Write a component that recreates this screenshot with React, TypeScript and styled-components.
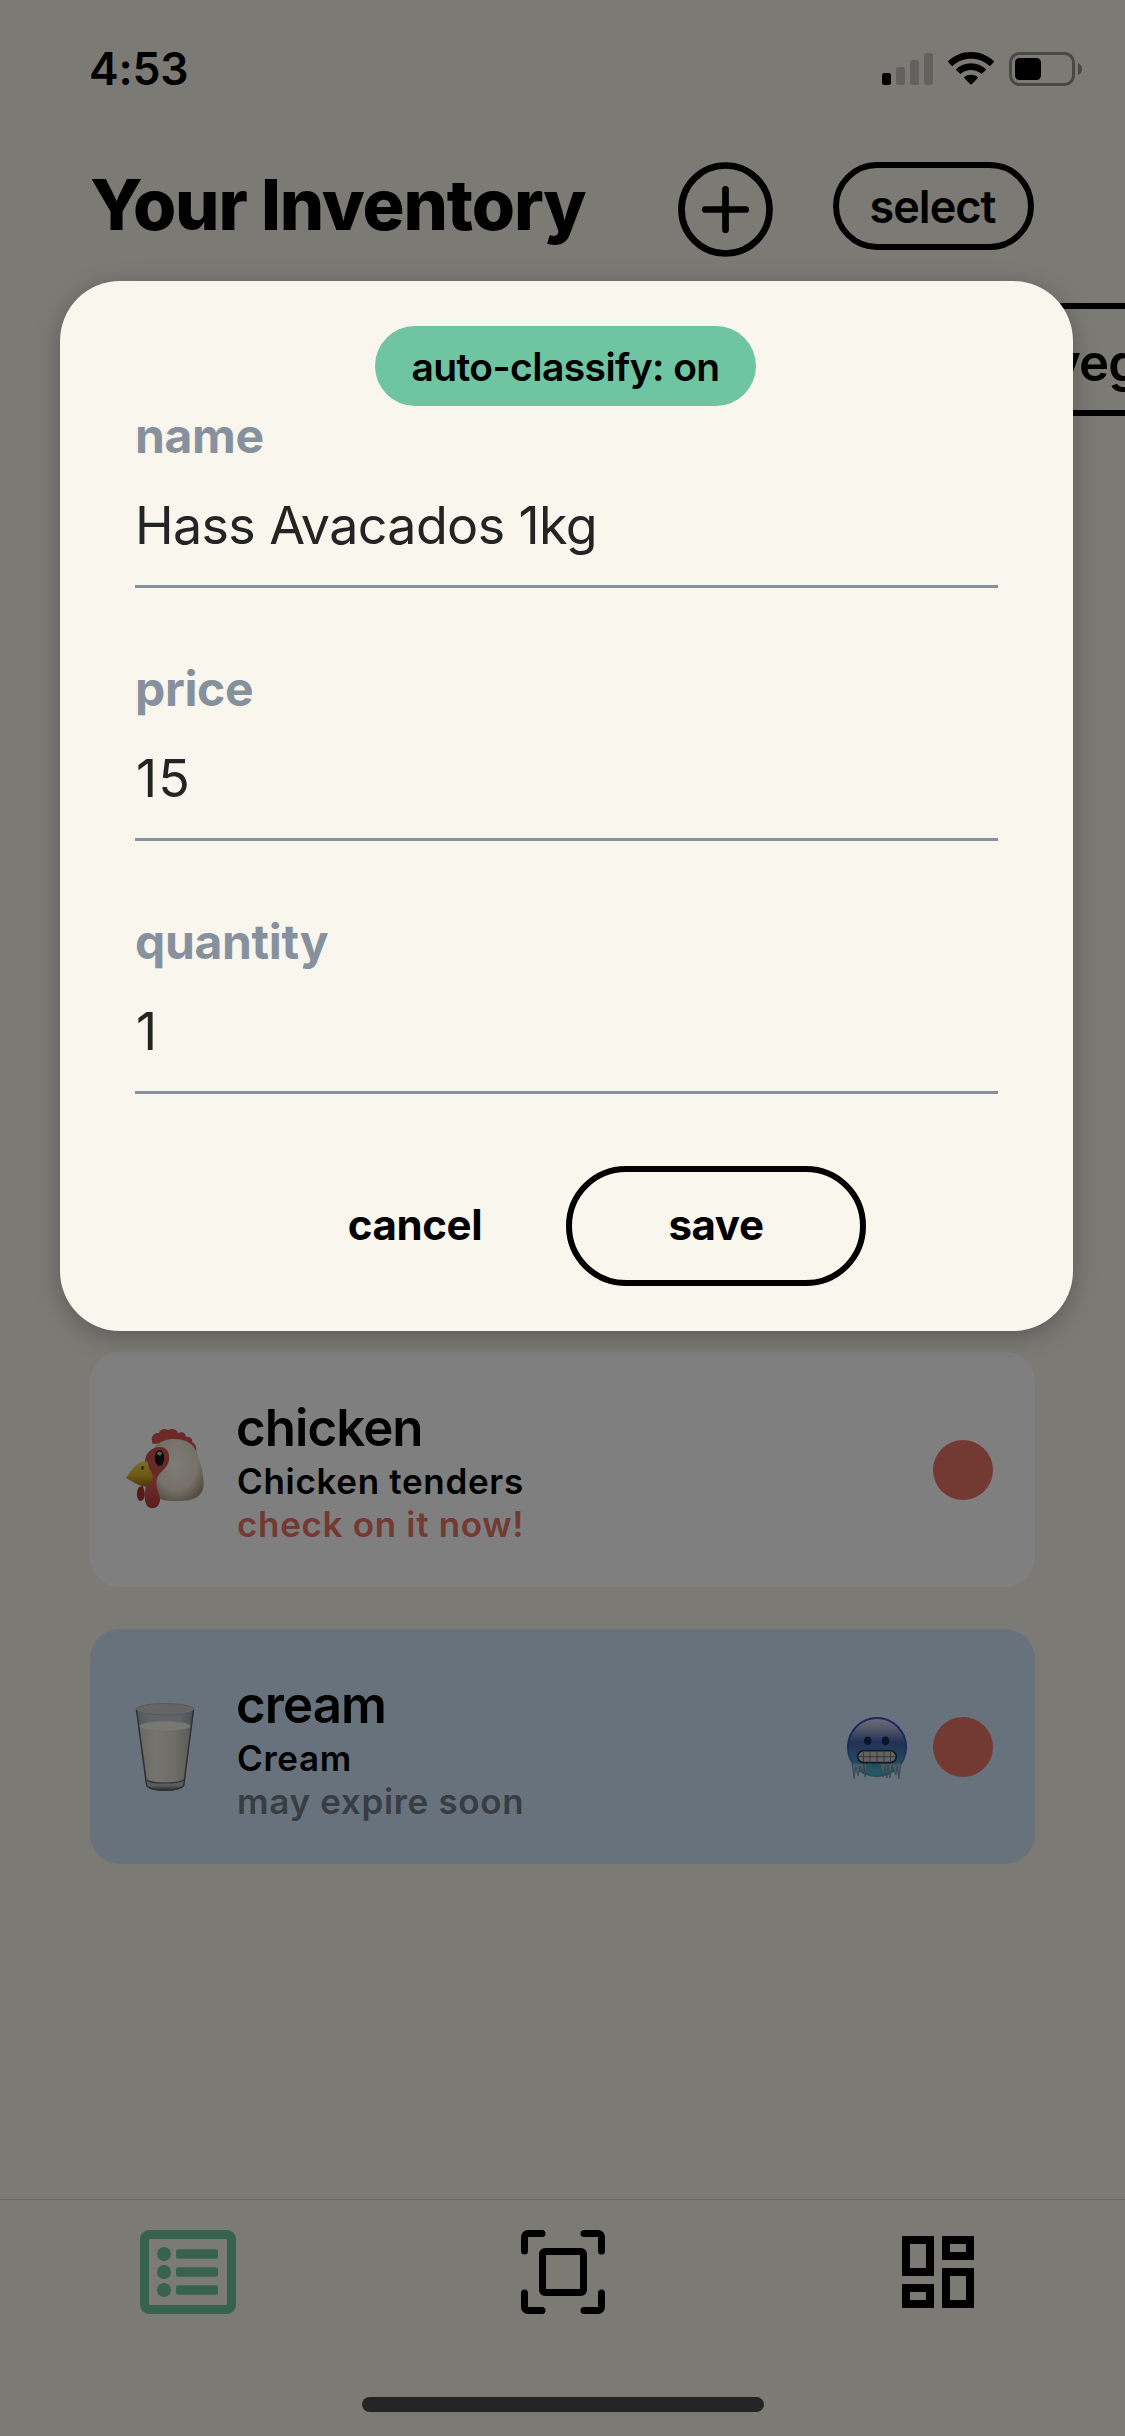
import React from 'react';
import styled, { createGlobalStyle } from 'styled-components';

const colors = {
  canvas: '#f8f4ea',
  sheet: '#f9f6ee',
  green: '#6fc4a1',
  red: '#e77467',
  slate: '#87919e',
  frozen: '#d0e4fa',
};

const GlobalStyle = createGlobalStyle`
  *, *::before, *::after { box-sizing: border-box; }
  body {
    margin: 0;
    background: ${colors.canvas};
    font-family: Inter, "Liberation Sans", sans-serif;
    color: #000;
  }
  button {
    font-family: inherit;
    color: inherit;
    padding: 0;
    border: 0;
    background: none;
  }
  svg { display: block; overflow: visible; flex: none; }
`;

const Screen = styled.main`
  position: relative;
  display: flex;
  flex-direction: column;
  width: 1125px;
  height: 2436px;
  overflow: hidden;
  background: ${colors.canvas};
`;

/* status bar */
const StatusBar = styled.div`
  display: flex;
  justify-content: space-between;
  align-items: flex-start;
  height: 162px;
  padding: 39px 43px 0 89px;
`;

const Clock = styled.span`
  font-size: 44.5px;
  font-weight: 600;
  line-height: 60px;
  letter-spacing: -0.2px;
`;

const StatusIcons = styled.div`
  display: flex;
  align-items: flex-start;
  gap: 15px;
  padding-top: 13px;
`;

/* header */
const Header = styled.header`
  display: flex;
  align-items: flex-start;
  height: 141px;
  padding: 0 91px 0 90px;
`;

const Title = styled.h1`
  flex: 1;
  margin: 3px 0 0;
  font-size: 70px;
  font-weight: 800;
  line-height: 80px;
  letter-spacing: -1.13px;
  white-space: nowrap;
`;

const AddButton = styled.button`
  width: 95px;
  height: 95px;
  margin-right: 60px;
`;

const SelectButton = styled.button`
  width: 201px;
  height: 88px;
  padding-right: 2px;
  border: 6px solid #000;
  border-radius: 44px;
  font-size: 45px;
  font-weight: 600;
  line-height: 78px;
  letter-spacing: -0.95px;
`;

const Filters = styled.div`
  display: flex;
  justify-content: flex-end;
  height: 113px;
  margin-right: -120px;
`;

const FilterChip = styled.div`
  width: 225px;
  padding-left: 25px;
  border: 6px solid #000;
  border-radius: 45px;
  font-size: 51px;
  font-weight: 600;
  line-height: 107px;
  letter-spacing: -0.9px;
`;

/* inventory */
const Inventory = styled.section`
  display: flex;
  flex-direction: column;
  justify-content: flex-end;
  gap: 42px;
  height: 1448px;
  padding: 0 90px;
`;

const Card = styled.article<{ $frozen?: boolean }>`
  display: flex;
  align-items: center;
  height: 235px;
  padding: 0 42px 0 30px;
  border-radius: 30px;
  background: ${(p) => (p.$frozen ? colors.frozen : '#fff')};
`;

const Picture = styled.div`
  display: flex;
  justify-content: center;
  width: 90px;
  margin-right: 26px;
  padding-right: 1px;
`;

const Details = styled.div`
  flex: 1;
  padding-top: 4px;
`;

const ItemName = styled.h2`
  margin: 0 0 2px;
  font-size: 51px;
  font-weight: 600;
  line-height: 60px;
  letter-spacing: -0.95px;
`;

const ItemLine = styled.p<{ $color?: string }>`
  margin: 0;
  padding-left: 1px;
  font-size: 35px;
  font-weight: 600;
  line-height: 43px;
  letter-spacing: 0.68px;
  color: ${(p) => p.$color ?? '#000'};
`;

const Badges = styled.div`
  display: flex;
  align-items: center;
  gap: 26px;
`;

const Dot = styled.span`
  width: 60px;
  height: 60px;
  border-radius: 50%;
  background: ${colors.red};
`;

/* tab bar */
const TabBar = styled.nav`
  display: grid;
  grid-template-columns: repeat(3, 1fr);
  place-items: center;
  height: 115px;
  margin-top: auto;
  padding-top: 30px;
  border-top: 1px solid #d2cfc7;
`;

const HomeArea = styled.div`
  display: flex;
  justify-content: center;
  height: 122px;
  padding-top: 83px;
`;

const HomeIndicator = styled.div`
  width: 402px;
  height: 15px;
  border-radius: 8px;
  background: #484848;
`;

/* edit dialog */
const Backdrop = styled.div`
  position: absolute;
  inset: 0;
  padding: 281px 52px 0 60px;
  background: rgba(0, 0, 0, 0.5);
`;

const Dialog = styled.form`
  display: flex;
  flex-direction: column;
  width: 1013px;
  height: 1050px;
  padding: 45px 75px;
  border-radius: 60px;
  background: ${colors.sheet};
  box-shadow: 0 6px 24px rgba(0, 0, 0, 0.25);
`;

const ClassifyToggle = styled.button`
  align-self: center;
  width: 381px;
  height: 80px;
  margin: 0 2px 2px 0;
  border-radius: 40px;
  background: ${colors.green};
  font-size: 39px;
  font-weight: 600;
  line-height: 81px;
  letter-spacing: -0.57px;
`;

const Fields = styled.div`
  display: flex;
  flex-direction: column;
  gap: 73px;
`;

const Field = styled.div`
  border-bottom: 3px solid ${colors.slate};
  padding-bottom: 26px;
`;

const FieldLabel = styled.div`
  margin-bottom: 29px;
  font-size: 48px;
  font-weight: 700;
  line-height: 56px;
  letter-spacing: -0.35px;
  color: ${colors.slate};
`;

const FieldValue = styled.div<{ $numeric?: boolean }>`
  padding-left: ${(p) => (p.$numeric ? 1 : 0)}px;
  font-size: 52px;
  font-weight: 400;
  line-height: 66px;
  letter-spacing: ${(p) => (p.$numeric ? 1.2 : -0.64)}px;
  color: #242424;
`;

const Actions = styled.div`
  display: flex;
  justify-content: center;
  gap: 1px;
  margin: 72px 2px 0 0;
`;

const ActionButton = styled.button<{ $outlined?: boolean }>`
  width: 300px;
  height: 120px;
  padding-bottom: 4px;
  border: 6px solid ${(p) => (p.$outlined ? '#000' : 'transparent')};
  border-radius: 60px;
  font-size: 42px;
  font-weight: 700;
  letter-spacing: -0.35px;
`;

const SignalIcon = () => (
  <svg width="51" height="33" viewBox="0 0 51 33">
    <rect x="0" y="21" width="9" height="12" rx="2.5" />
    <g opacity="0.2">
      <rect x="14" y="15" width="9" height="18" rx="2.5" />
      <rect x="28" y="8" width="9" height="25" rx="2.5" />
      <rect x="42" y="1" width="9" height="32" rx="2.5" />
    </g>
  </svg>
);

const WifiIcon = () => (
  <svg width="46" height="33" viewBox="0 0 46 33">
    <path d="M23 0C31.8 0 39.800 3.400 45.700 9C46.100 9.400 46.100 9.900 45.700 10.300L42.300 13.700C41.900 14.100 41.400 14.100 41 13.700C36.300 9.400 30 6.800 23 6.800S9.700 9.400 5 13.700C4.600 14.100 4.100 14.100 3.700 13.700L.3 10.300C-.1 9.900-.1 9.400.3 9C6.200 3.400 14.200 0 23 0Z" />
    <path d="M23 11.300C28.700 11.300 33.800 13.400 37.600 16.900C38 17.300 38 17.800 37.600 18.200L34.200 21.600C33.800 22 33.300 22 32.900 21.600C30.300 19.300 26.800 18 23 18S15.700 19.300 13.100 21.600C12.700 22 12.200 22 11.800 21.600L8.400 18.200C8 17.800 8 17.300 8.400 16.900C12.200 13.400 17.300 11.300 23 11.300Z" />
    <path d="M23 22.700C25.600 22.700 27.900 23.600 29.600 25C30 25.400 30 25.900 29.600 26.300L23.700 32.300C23.300 32.700 22.700 32.700 22.300 32.300L16.400 26.300C16 25.900 16 25.400 16.400 25C18.100 23.600 20.400 22.700 23 22.700Z" />
  </svg>
);

const BatteryIcon = () => (
  <svg width="73" height="34" viewBox="0 0 73 34">
    <g opacity="0.4">
      <rect x="1.500" y="1.500" width="63" height="31" rx="9" fill="none" stroke="#000" strokeWidth="3" />
      <path d="M69 11C71.500 12 73 14.300 73 17S71.500 22 69 23Z" />
    </g>
    <rect x="6" y="6" width="26" height="22" rx="4.500" />
  </svg>
);

const AddIcon = () => (
  <svg width="95" height="95" viewBox="0 0 95 95" fill="none" stroke="#000" strokeWidth="6.700" strokeLinecap="round">
    <circle cx="47.500" cy="47.500" r="44" />
    <path d="M47.500 27.300V67.700M27.300 47.500H67.700" />
  </svg>
);

const ChickenPicture = () => (
  <svg width="78" height="81" viewBox="0 0 78 81">
    <defs>
      <radialGradient id="feathers" cx="0.45" cy="0.4" r="0.65">
        <stop offset="0" stopColor="#fdf8ee" />
        <stop offset="0.65" stopColor="#ece3d4" />
        <stop offset="1" stopColor="#aa9b83" />
      </radialGradient>
      <linearGradient id="beak" x1="0" y1="0" x2="0" y2="1">
        <stop offset="0" stopColor="#f2d74c" />
        <stop offset="0.55" stopColor="#dcb42c" />
        <stop offset="1" stopColor="#9c6a14" />
      </linearGradient>
      <linearGradient id="wattle" x1="0" y1="0" x2="0" y2="1">
        <stop offset="0" stopColor="#e4655f" />
        <stop offset="1" stopColor="#b23a36" />
      </linearGradient>
    </defs>
    <path d="M27 15C24 9 27 3 33 4C34 0 39-1 42 1C46-1 51 0 52 4C56 2 60 4 60 8C64 7 67 10 66 13C70 15 71 19 70 24L48 13Z" fill="#d9534f" />
    <path d="M28 19C33 12 41 10 48 10C60 10 68 15 71 24C75 36 78 48 77.500 56C77 67 69 72 52 72C40 72 32 71 30 66Z" fill="url(#feathers)" />
    <path d="M19 33C19 23 27 18 34 18C41 18 44 24 43 31C42 40 32 43 31 50L25 48Z" fill="#cf5350" />
    <path d="M27 45C21 51 18 60 19 71C20 82 33 82 34 71C34 64 29 60 31 49Z" fill="url(#wattle)" />
    <path d="M13 58C10 62 10 70 14 72C18 72 20 67 18 61L17 57Z" fill="#a83632" />
    <path d="M0 49C4 43 9 36 14 33.500C18 31.500 21 32 22 34C22 40 27 43 27 48C25 53 22 58 19 57.500C13 57 6 52 0 49Z" fill="url(#beak)" />
    <ellipse cx="16.500" cy="39" rx="1.300" ry="2" fill="#5a3b10" />
    <ellipse cx="33.500" cy="29" rx="4.700" ry="8" fill="#15171a" />
    <ellipse cx="33.500" cy="24.500" rx="2.200" ry="2" fill="#b8b8bc" />
  </svg>
);

const MilkPicture = () => (
  <svg width="60" height="88" viewBox="0 0 60 88">
    <defs>
      <linearGradient id="milk" x1="0" y1="0" x2="1" y2="0">
        <stop offset="0" stopColor="#d5d2ca" />
        <stop offset="0.3" stopColor="#ece8de" />
        <stop offset="0.7" stopColor="#dcd8ce" />
        <stop offset="1" stopColor="#bab6ac" />
      </linearGradient>
      <linearGradient id="glass" x1="0" y1="0" x2="1" y2="0">
        <stop offset="0" stopColor="#a2a9b1" />
        <stop offset="0.25" stopColor="#c3c8ce" />
        <stop offset="0.75" stopColor="#c3c8ce" />
        <stop offset="1" stopColor="#9299a1" />
      </linearGradient>
      <linearGradient id="glassBase" x1="0" y1="0" x2="0" y2="1">
        <stop offset="0" stopColor="#9da0a4" />
        <stop offset="0.45" stopColor="#bcbec0" />
        <stop offset="1" stopColor="#4c4e52" />
      </linearGradient>
    </defs>
    <path d="M1 6L11.500 82C12 90 48 90 49 82L59 6Z" fill="url(#glass)" />
    <ellipse cx="30" cy="6.300" rx="29" ry="5.800" fill="#cacacd" stroke="#a6a8ae" strokeWidth="0.800" />
    <path d="M4.500 23L12.500 76C16 81 44 81 48 76L55.500 23Z" fill="url(#milk)" />
    <ellipse cx="30" cy="23" rx="25.500" ry="4.700" fill="#f2eee4" />
    <path d="M11 77C14 82 46 82 49 77L48.500 82C47 90 13 90 11.700 82Z" fill="url(#glassBase)" />
    <path d="M12 77C16 81 44 81 48.500 77" fill="none" stroke="#66686b" strokeWidth="1.200" />
    <path d="M1.500 7L11.500 82C13 89 47 89 48.800 82L58.500 7" fill="none" stroke="#5c5e62" strokeWidth="1.400" />
  </svg>
);

const ColdFace = () => (
  <svg width="60" height="60" viewBox="0 0 60 60">
    <defs>
      <linearGradient id="ice" x1="0" y1="0" x2="0" y2="1">
        <stop offset="0" stopColor="#d5dbe8" />
        <stop offset="0.15" stopColor="#b0b8d6" />
        <stop offset="0.42" stopColor="#4860b0" />
        <stop offset="0.65" stopColor="#4288b4" />
        <stop offset="1" stopColor="#4cb8d0" />
      </linearGradient>
      <linearGradient id="rim" x1="0" y1="0" x2="0" y2="1">
        <stop offset="0" stopColor="#3450d0" />
        <stop offset="0.5" stopColor="#345cb0" />
        <stop offset="1" stopColor="#4ba6bc" />
      </linearGradient>
    </defs>
    <circle cx="30" cy="30" r="29" fill="url(#ice)" stroke="url(#rim)" strokeWidth="2.200" />
    <ellipse cx="20.700" cy="23.700" rx="3.700" ry="4.300" fill="#0f2c54" />
    <ellipse cx="38.500" cy="23.700" rx="3.700" ry="4.300" fill="#0f2c54" />
    <path d="M5 46L7 62L9 50L11 59L13 49L16 57L17 47L18 60L20 47ZM33 47L36 60L38 49L40 61L41 48L43 61L45 48L49 58L50 49L52 62L54 46Z" fill="#93b6ca" stroke="#5b8298" strokeWidth="0.700" />
    <rect x="10.700" y="33.700" width="38.600" height="12" rx="6" fill="#c9c7c2" stroke="#1c3a55" strokeWidth="1.800" />
    <path d="M11 39.700H49M16.500 34.500V45M23 34V45.500M30 34V45.500M37 34V45.500M43.500 34.500V45" stroke="#62676c" strokeWidth="0.900" />
  </svg>
);

const ListIcon = () => (
  <svg width="96" height="84" viewBox="0 0 96 84" fill={colors.green}>
    <path fillRule="evenodd" d="M9 0H87A9 9 0 0 1 96 9V75A9 9 0 0 1 87 84H9A9 9 0 0 1 0 75V9A9 9 0 0 1 9 0ZM10 9A1 1 0 0 0 9 10V74A1 1 0 0 0 10 75H86A1 1 0 0 0 87 74V10A1 1 0 0 0 86 9Z" />
    {[24, 42, 60].map((y) => (
      <g key={y}>
        <circle cx="24" cy={y} r="7" />
        <rect x="36" y={y - 4.8} width="42" height="9.600" rx="2" />
      </g>
    ))}
  </svg>
);

const ScanIcon = () => (
  <svg width="84" height="84" viewBox="0 0 84 84" fill="none" stroke="#000" strokeWidth="7" strokeLinecap="round" strokeLinejoin="round">
    <path d="M21 3.500H7A3.500 3.500 0 0 0 3.500 7V21M63 3.500H77A3.500 3.500 0 0 1 80.500 7V21M21 80.500H7A3.500 3.500 0 0 1 3.500 77V63M63 80.500H77A3.500 3.500 0 0 0 80.500 77V63" />
    <rect x="21.500" y="21.500" width="41" height="41" rx="2.500" />
  </svg>
);

const DashboardIcon = () => (
  <svg width="72" height="72" viewBox="0 0 72 72" fill="none" stroke="#000" strokeWidth="8">
    <rect x="4" y="4" width="24" height="32" />
    <rect x="44" y="4" width="24" height="16" />
    <rect x="4" y="52" width="24" height="16" />
    <rect x="44" y="36" width="24" height="32" />
  </svg>
);

const fields = [
  { label: 'name', value: 'Hass Avacados 1kg' },
  { label: 'price', value: '15', numeric: true },
  { label: 'quantity', value: '1', numeric: true },
];

export default function App() {
  return (
    <>
      <GlobalStyle />
      <Screen>
        <StatusBar>
          <Clock>4:53</Clock>
          <StatusIcons>
            <SignalIcon />
            <WifiIcon />
            <BatteryIcon />
          </StatusIcons>
        </StatusBar>

        <Header>
          <Title>Your Inventory</Title>
          <AddButton aria-label="add item">
            <AddIcon />
          </AddButton>
          <SelectButton>select</SelectButton>
        </Header>

        <Filters>
          <FilterChip>veg</FilterChip>
        </Filters>

        <Inventory>
          <Card>
            <Picture>
              <ChickenPicture />
            </Picture>
            <Details>
              <ItemName>chicken</ItemName>
              <ItemLine>Chicken tenders</ItemLine>
              <ItemLine $color={colors.red}>check on it now!</ItemLine>
            </Details>
            <Badges>
              <Dot />
            </Badges>
          </Card>
          <Card $frozen>
            <Picture>
              <MilkPicture />
            </Picture>
            <Details>
              <ItemName>cream</ItemName>
              <ItemLine>Cream</ItemLine>
              <ItemLine $color="#6c7a86">may expire soon</ItemLine>
            </Details>
            <Badges>
              <ColdFace />
              <Dot />
            </Badges>
          </Card>
        </Inventory>

        <TabBar>
          <ListIcon />
          <ScanIcon />
          <DashboardIcon />
        </TabBar>
        <HomeArea>
          <HomeIndicator />
        </HomeArea>

        <Backdrop>
          <Dialog>
            <ClassifyToggle type="button">auto-classify: on</ClassifyToggle>
            <Fields>
              {fields.map((field) => (
                <Field key={field.label}>
                  <FieldLabel>{field.label}</FieldLabel>
                  <FieldValue $numeric={field.numeric}>{field.value}</FieldValue>
                </Field>
              ))}
            </Fields>
            <Actions>
              <ActionButton type="button">cancel</ActionButton>
              <ActionButton type="button" $outlined>
                save
              </ActionButton>
            </Actions>
          </Dialog>
        </Backdrop>
      </Screen>
    </>
  );
}
